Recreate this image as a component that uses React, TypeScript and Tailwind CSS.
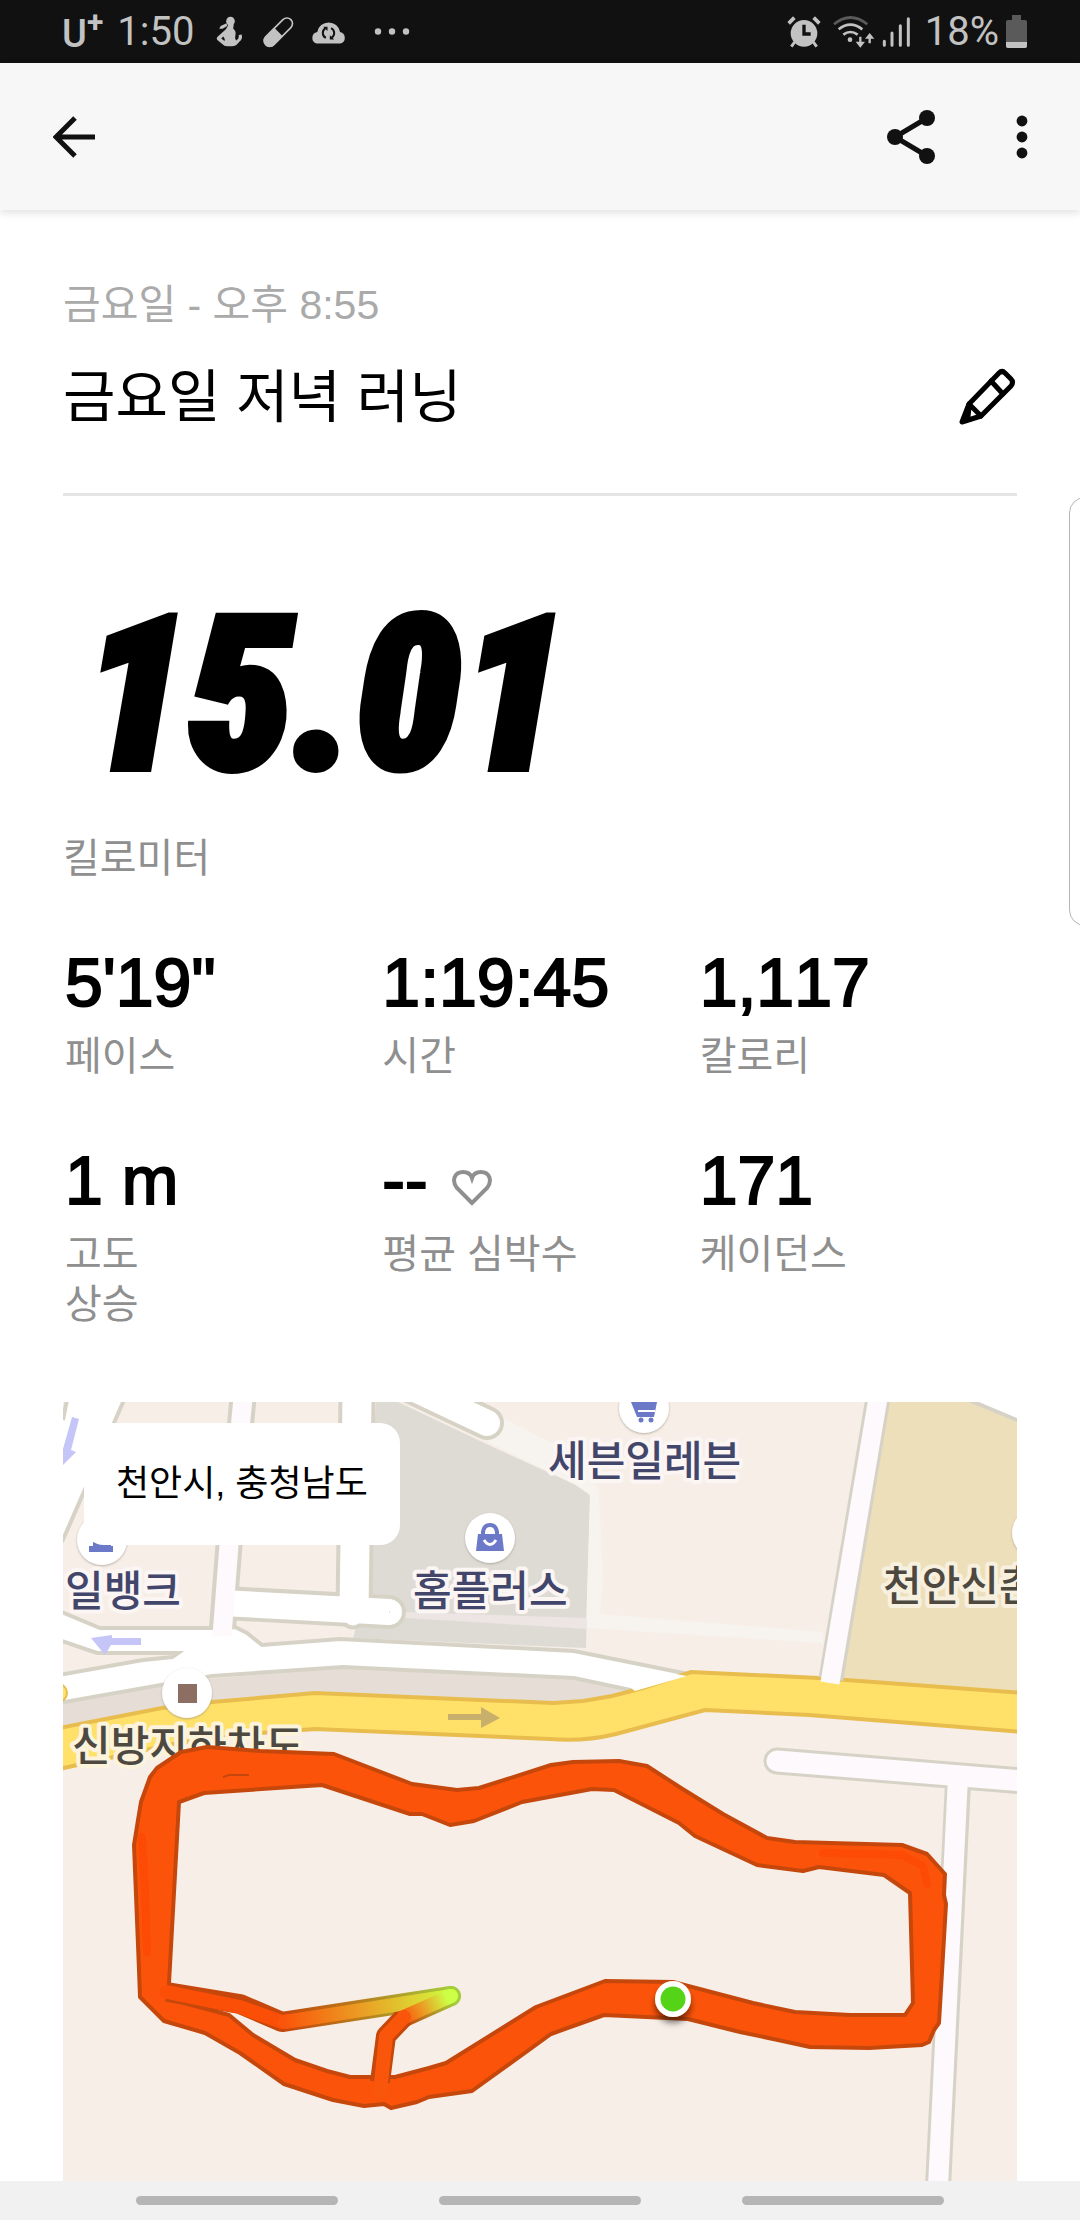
import React from 'react';

const stats = [
  { value: `5'19"`, label: '페이스' },
  { value: '1:19:45', label: '시간' },
  { value: '1,117', label: '칼로리' },
  { value: '1 m', label: '고도\n상승' },
  { value: '--', label: '평균 심박수', heart: true },
  { value: '171', label: '케이던스' },
];

const StatusBar: React.FC = () => (
  <div className="flex h-[63px] items-center justify-between bg-[#111111] pl-[62px] pr-[53px] font-[Roboto,sans-serif] text-[#c2c2c2]">
    <div className="flex items-center">
      <div className="flex items-start leading-none">
        <span className="pt-1 text-[38px] font-medium leading-9">U</span>
        <span className="text-[30px] font-bold leading-5">+</span>
      </div>
      <span className="ml-[14px] text-[40px] leading-none">1:50</span>
      <svg className="ml-[22px] h-[31px] w-[27px]" viewBox="32 30 82 94" fill="currentColor">
        <ellipse cx="76" cy="46" rx="13" ry="14" />
        <path d="M64 52 L46 60 L42 69 L52 69 L66 60 Z" />
        <path
          fillRule="evenodd"
          d="M70 56 H86 L84 68 Q94 76 91 88 Q88 98 93 104 Q103 100 101 88 L110 86 Q114 100 102 109 Q94 122 80 122 H66 Q56 122 52 116 L36 103 Q32 98 36 94 L62 70 Z M54 92 L48 98 L58 106 Q60 98 54 92 Z"
        />
      </svg>
      <svg className="ml-5 h-8 w-[31px]" viewBox="175 28 94 96">
        <g transform="rotate(45 222 76)">
          <rect x="205" y="23" width="34" height="107" rx="17" fill="none" stroke="currentColor" strokeWidth="5" />
          <path d="M203 76 H241 V114 A19 19 0 0 1 203 114 Z" fill="currentColor" />
        </g>
      </svg>
      <svg className="ml-4 h-[26px] w-[37px]" viewBox="316 38 112 78">
        <path d="M336 112 A18 18 0 0 1 338 77 A35 35 0 0 1 407 77 A18 18 0 0 1 408 112 Z" fill="currentColor" />
        <g fill="none" stroke="#111111" strokeWidth="6">
          <path d="M364 95 A17 17 0 0 1 362 66" />
          <path d="M380 65 A17 17 0 0 1 382 94" />
        </g>
        <path d="M356 61 H369 V74 Z M389 100 H376 V87 Z" fill="#111111" />
      </svg>
      <svg className="ml-[27px] h-[7px] w-9" viewBox="0 0 36 7" fill="currentColor">
        <circle cx="4" cy="3.5" r="3.2" />
        <circle cx="18" cy="3.5" r="3.2" />
        <circle cx="32" cy="3.5" r="3.2" />
      </svg>
    </div>
    <div className="flex items-center">
      <svg className="h-8 w-[34px]" viewBox="22 28 100 96">
        <circle cx="72" cy="80" r="40" fill="currentColor" />
        <g fill="none" stroke="currentColor" strokeWidth="11">
          <path d="M26 50 L43 33 M101 33 L118 50" />
          <path d="M44 106 L34 120 M100 106 L110 120" strokeWidth="9" />
        </g>
        <path d="M72 54 V82 H92" fill="none" stroke="#111111" strokeWidth="10" />
      </svg>
      <svg className="ml-3 h-8 w-[42px]" viewBox="162 26 126 96" fill="none" stroke="currentColor" strokeWidth="8">
        <path d="M165 51 Q214 10 265 51" stroke="#5a5a5a" />
        <path d="M179 66 Q214 38 250 66" />
        <path d="M193 82 Q214 66 236 82" />
        <circle cx="213" cy="97" r="7" fill="currentColor" stroke="none" />
        <path d="M244 88 V108 M272 108 V88" strokeWidth="7" />
        <path d="M230 103 H258 L244 121 Z M258 94 H286 L272 77 Z" fill="currentColor" stroke="none" />
      </svg>
      <svg className="ml-[7px] h-8 w-7" viewBox="310 28 84 96" stroke="currentColor" strokeWidth="9" strokeLinecap="round">
        <path d="M317 104 V116 M340 79 V116 M365 57 V116 M389 36 V116" />
      </svg>
      <span className="ml-[15px] text-[40px] leading-none">18%</span>
      <svg className="ml-[7px] h-[33px] w-[21px]" viewBox="0 0 21 33">
        <path d="M6 0 H15 V5 H19 Q21 5 21 7 V31 Q21 33 19 33 H2 Q0 33 0 31 V7 Q0 5 2 5 H6 Z" fill="#5a5a5a" />
        <path d="M0 27 H21 V31 Q21 33 19 33 H2 Q0 33 0 31 Z" fill="currentColor" />
      </svg>
    </div>
  </div>
);

const AppBar: React.FC = () => (
  <header className="flex h-[147px] items-center justify-between bg-[#f7f7f7] pl-[53px] pr-[50px] text-[#111111] shadow-[0_3px_8px_rgba(0,0,0,0.12)]">
    <button type="button" aria-label="뒤로">
      <svg className="h-[42px] w-[42px]" viewBox="0 0 42 42" fill="none" stroke="currentColor" strokeWidth="5">
        <path d="M22 2 L3 21 L22 40 M3 21 H42" />
      </svg>
    </button>
    <div className="flex items-center gap-[79px]">
      <button type="button" aria-label="공유">
        <svg className="h-[54px] w-12" viewBox="0 0 48 54" fill="currentColor">
          <path d="M40 8 L8 27 L40 46" fill="none" stroke="currentColor" strokeWidth="5" />
          <circle cx="40" cy="8" r="8" />
          <circle cx="8" cy="27" r="8" />
          <circle cx="40" cy="46" r="8" />
        </svg>
      </button>
      <button type="button" aria-label="더보기">
        <svg className="h-[44px] w-4" viewBox="0 0 16 44" fill="currentColor">
          <circle cx="8" cy="6" r="5.4" />
          <circle cx="8" cy="22" r="5.4" />
          <circle cx="8" cy="38" r="5.4" />
        </svg>
      </button>
    </div>
  </header>
);

const HeartIcon: React.FC = () => (
  <svg className="mt-4 h-9 w-10 text-[#8f8f8f]" viewBox="0 0 40 36" fill="none" stroke="currentColor" strokeWidth="4">
    <path d="M20 33 L5 18 C-1 10 3 2 11 2 C16 2 19 5 20 8 C21 5 24 2 29 2 C37 2 41 10 35 18 Z" />
  </svg>
);

const RouteMap: React.FC = () => (
  <svg
    className="block h-[779px] w-full"
    viewBox="0 0 954 779"
    preserveAspectRatio="xMidYMin slice"
    role="img"
    aria-label="러닝 경로"
  >
    <defs>
      <linearGradient id="paceFill" gradientUnits="userSpaceOnUse" x1="222" y1="621" x2="388" y2="594">
        <stop offset="0" stopColor="#fa560b" />
        <stop offset="0.5" stopColor="#e9a426" />
        <stop offset="0.85" stopColor="#dadf35" />
        <stop offset="1" stopColor="#ccff45" />
      </linearGradient>
      <linearGradient id="paceEdge" gradientUnits="userSpaceOnUse" x1="222" y1="621" x2="388" y2="594">
        <stop offset="0" stopColor="#c5470c" />
        <stop offset="0.5" stopColor="#b7831f" />
        <stop offset="1" stopColor="#a5cc3b" />
      </linearGradient>
      <linearGradient id="returnFill" gradientUnits="userSpaceOnUse" x1="340" y1="616" x2="384" y2="596">
        <stop offset="0" stopColor="#fa560b" />
        <stop offset="0.5" stopColor="#e9a426" />
        <stop offset="1" stopColor="#ccff45" />
      </linearGradient>
      <linearGradient id="returnEdge" gradientUnits="userSpaceOnUse" x1="340" y1="616" x2="388" y2="594">
        <stop offset="0" stopColor="#c5470c" />
        <stop offset="1" stopColor="#a5cc3b" />
      </linearGradient>
      <filter id="dotShadow" x="-50%" y="-50%" width="200%" height="200%">
        <feDropShadow dx="0" dy="6" stdDeviation="3" floodColor="#000000" floodOpacity="0.5" />
      </filter>
      <filter id="pinShadow" x="-50%" y="-50%" width="200%" height="200%">
        <feDropShadow dx="0" dy="1" stdDeviation="1" floodColor="#8a8578" floodOpacity="0.6" />
      </filter>
    </defs>

    <rect width="954" height="779" fill="#f7eee7" />

    {/* blocks */}
    <path d="M313 0 H335 L432 46 L511 82 Q527 88 527 96 L523 246 L290 236 L300 200 Z" fill="#dedbd5" />
    <path d="M436 14 L522 58 L536 90 L540 180 L537 212 L760 230 V241 L523 226 L527 93 L511 82 L425 40 Z" fill="#f7f3ee" />
    <path d="M342 210 L524 216 V227 L342 216 Z" fill="#ece5e4" />
    <path d="M815 0 H907 L954 20 V289 L770 276 Z" fill="#eedfbb" />
    <path d="M907 0 H954 V19 Z" fill="#ffffff" />
    <path d="M906 -2 L956 19" stroke="#d6d3c6" strokeWidth="4" />
    <path d="M0 300 L99 281 L280 265 L511 276 L590 291 L504 303 L252 293 L99 308 L0 327 Z" fill="#e6ded6" />

    {/* small roads */}
    <path d="M3 0 H61 L0 138 V14 Z" fill="#ffffff" />
    <path d="M61 -2 L-1 140 M4 -2 L0 18" stroke="#d6d3c6" strokeWidth="4" />
    <g fill="none" stroke="#d6d3c6">
      <path d="M350 -14 L424 21" strokeWidth="34" strokeLinecap="round" />
      <path d="M180 -4 L166 143 L159 232" strokeWidth="27" />
      <path d="M294 -4 L291 205" strokeWidth="37" />
      <path d="M162 201 L326 210" strokeWidth="34" />
      <circle cx="326" cy="210" r="8" strokeWidth="18" />
      <circle cx="290" cy="214" r="12" strokeWidth="3" />
    </g>

    {/* main white road */}
    <g stroke="#d6d3c6" strokeWidth="4" fill="#ffffff">
      <path d="M-4 209 L37 226 H149 L172 225 L184 231 L199 243 L277 237 L511 249 L640 275 L572 289 L511 276 L280 265 L149 274 L-4 301 V273 L80 258 L149 251 H34 L-4 238 Z" />
    </g>
    <path d="M130 243 L190 248 L160 266 L90 271 Z" fill="#ffffff" />
    <g fill="none" stroke="#ffffff">
      <path d="M350 -14 L424 21" strokeWidth="26" strokeLinecap="round" />
      <path d="M294 -4 L291 210" strokeWidth="29" />
      <path d="M160 201 L326 210" strokeWidth="26" />
      <circle cx="326" cy="210" r="6" strokeWidth="14" />
      <circle cx="290" cy="214" r="9" fill="#ffffff" />
      <path d="M180 -4 L166 143 L159 234" strokeWidth="19" stroke="#fdf9fd" />
    </g>

    {/* yellow road */}
    <path
      d="M-4 326 L99 306 L149 300 L252 291 L490 301 L520 299 L549 294 L580 286 L628 270 L756 276 L960 291 V330 L746 313 L642 308 L553 332 Q520 340 487 337 L252 327 L197 331 L115 341 L-4 367 Z"
      fill="#ffe169"
      stroke="#e8bd4d"
      strokeWidth="4"
    />
    <path d="M572 289 L624 274 L600 270 L560 280 Z" fill="#ffffff" />
    <circle cx="-5" cy="291" r="9" fill="#ffe169" stroke="#e8bd4d" strokeWidth="2" />

    {/* right side roads */}
    <path d="M815 -4 L768 277" stroke="#d6d3c6" strokeWidth="25" />
    <path d="M815 -4 L767 281" stroke="#fdf9fd" strokeWidth="19" />
    <g fill="none" stroke="#d6d3c6">
      <path d="M714 359 L960 379" strokeWidth="27" strokeLinecap="round" />
      <path d="M895 381 L875 785" strokeWidth="26" />
    </g>
    <g fill="none" stroke="#fdf9fd">
      <path d="M714 359 L960 379" strokeWidth="21" strokeLinecap="round" />
      <path d="M895 375 L875 785" strokeWidth="20" />
    </g>

    {/* direction arrows */}
    <g fill="#c5c6f7">
      <path d="M9 15 L16 17 L8 48 L13 50 L0 63 V47 Z" />
      <path d="M28 236 L49 233 V236 H78 V243 H48 L42 253 Z" />
    </g>
    <path d="M385 312 H418 V305 L437 316 L418 326 V318 H385 Z" fill="#c8b06c" />

    {/* places */}
    <g fill="#ffffff" filter="url(#pinShadow)">
      <circle cx="39" cy="138" r="25" />
      <circle cx="427" cy="136" r="25" />
      <circle cx="581" cy="6" r="25" />
      <circle cx="124" cy="291" r="25" />
      <circle cx="974" cy="131" r="25" />
    </g>
    <path d="M30 138 H48 V144 H50 V150 H26 V144 H30 Z" fill="#6c79c8" />
    <path d="M415 132 H439 L441 149 H413 Z" fill="#6c79c8" />
    <path d="M420 133 V130 Q421 123 427 123 Q433 123 434 130 V133" fill="none" stroke="#6c79c8" strokeWidth="4" />
    <path d="M421 138 Q427 147 433 138" fill="none" stroke="#ffffff" strokeWidth="3" />
    <path d="M568 0 H594 L591 15 H574 Z" fill="#6c79c8" />
    <path d="M575 9 H592" stroke="#ffffff" strokeWidth="2" />
    <circle cx="578" cy="18" r="2.5" fill="#6c79c8" />
    <circle cx="588" cy="18" r="2.5" fill="#6c79c8" />
    <rect x="115" y="282" width="19" height="19" fill="#8d6e63" />
    <g
      className="font-['Noto_Sans_CJK_KR',sans-serif] text-[42px] font-medium"
      fill="#43466b"
      stroke="#fbf5f4"
      strokeWidth="8"
      strokeLinejoin="round"
      paintOrder="stroke"
    >
      <text x="485" y="74">세븐일레븐</text>
      <text x="350" y="204">홈플러스</text>
      <text x="2" y="204">일뱅크</text>
      <text x="820" y="199" fill="#4d4840" stroke="#f8f0df">천안신촌</text>
      <text x="9" y="359" fill="#4d4840" stroke="#fbf3dc">신방지하차도</text>
    </g>

    {/* run route */}
    <path
      fillRule="evenodd"
      fill="#fb540a"
      stroke="#c5470c"
      strokeWidth="4"
      strokeLinejoin="round"
      d="M144 345 L197 349 L271 352 L349 382 L394 388 L416 386 L488 363 L510 360 L556 359 L584 364 L618 386 L660 412 L704 436 L732 440 L839 443 L864 452 L882 472 L881 493 L883 502 L876 621 L871 628 L866 640 L859 643 L806 646 L747 645 L715 638 L677 630 L625 617 L541 613 L488 632 L409 689 L366 695 L354 700 L328 706 L321 702 L301 704 L270 698 L221 682 L177 651 L142 631 L101 619 L77 595 L76 568 L71 443 L75 418 L78 400 L87 375 L94 366 L118 350 Z
         M116 400 L141 391 L259 383 L347 412 L359 412 L387 423 L411 419 L459 400 L529 387 L551 388 L616 421 L632 434 L694 463 L740 469 L756 465 L821 473 L847 491 L850 601 L842 613 L787 613 L732 610 L690 601 L610 580 L542 579 L473 605 L383 661 L366 666 L332 675 L287 675 L264 669 L232 658 L190 633 L166 613 L106 597 L106 581 Z"
    />
    <path d="M160 375 L166 373 L186 373" fill="none" stroke="#c5470c" strokeWidth="2" />
    <path
      d="M79 435 L82 490 L84 550 M760 451 L839 453 L860 464 L864 482"
      fill="none"
      stroke="#ff4400"
      strokeWidth="8"
      strokeLinecap="round"
      strokeLinejoin="round"
      opacity="0.6"
    />
    <g fill="none" strokeLinejoin="round">
      <path d="M104 590 L177 602 L219 620" stroke="#c5470c" strokeWidth="20" />
      <path d="M219 620 L388 594" stroke="url(#paceEdge)" strokeWidth="20" strokeLinecap="round" />
      <path d="M388 594 L341 615" stroke="url(#returnEdge)" strokeWidth="20" strokeLinecap="round" />
      <path d="M341 615 L323 634 L317 680" stroke="#c5470c" strokeWidth="20" />
      <path d="M104 590 L177 605 L219 620 L224 619" stroke="#fb4f08" strokeWidth="14" strokeLinecap="round" />
      <path d="M222 620 L388 594" stroke="url(#paceFill)" strokeWidth="14" strokeLinecap="round" />
      <path d="M388 594 L341 615" stroke="url(#returnFill)" strokeWidth="14" strokeLinecap="round" />
      <path d="M341 615 L323 634 L317 690" stroke="#fa560b" strokeWidth="14" strokeLinecap="round" />
    </g>
    <g filter="url(#dotShadow)">
      <circle cx="610" cy="597" r="18" fill="#ffffff" />
    </g>
    <circle cx="610" cy="597" r="12.5" fill="#54d317" />
  </svg>
);

const App: React.FC = () => {
  return (
    <div className="relative flex min-h-screen flex-col overflow-hidden bg-white font-['Liberation_Sans','Noto_Sans_CJK_KR',sans-serif] text-black">
      <StatusBar />
      <AppBar />

      <main className="flex-1 px-[63px] pt-[70px]">
        <section className="border-b-[3px] border-[#e5e5e5] pb-[61px]">
          <p className="text-[41px] leading-[50px] text-[#aaaaaa]">금요일 - 오후 8:55</p>
          <div className="mt-8 flex items-center justify-between">
            <h1 className="text-[57px] leading-[70px]">금요일 저녁 러닝</h1>
            <button type="button" aria-label="제목 수정">
              <svg
                className="h-[60px] w-[60px]"
                viewBox="0 0 60 60"
                fill="none"
                stroke="currentColor"
                strokeWidth="5"
                strokeLinejoin="round"
                strokeLinecap="round"
              >
                <path d="M5 55 L12 37 L42 6 Q45 3 48 6 L54 12 Q57 15 54 19 L24 49 Z" />
                <path d="M34 14 L46 27 M12 37 L24 49 M12 40 L11 50" />
              </svg>
            </button>
          </div>
        </section>

        <section className="mt-[120px]">
          <p className="pl-5 font-['Roboto_Condensed',Roboto,sans-serif] text-[212px] font-black italic leading-[160px] [-webkit-text-stroke:8px_black]">
            15.01
          </p>
          <p className="mt-[57px] text-[40px] leading-[50px] text-[#8f8f8f]">킬로미터</p>
        </section>

        <dl className="mt-16 grid grid-cols-3 gap-y-16 pl-0.5">
          {stats.map(({ value, label, heart }) => (
            <div key={label} className="flex flex-col-reverse justify-end gap-[14px]">
              <dt className="whitespace-pre-line text-[40px] leading-[50px] text-[#8f8f8f]">{label}</dt>
              <dd className="flex items-center gap-6 text-[68px] leading-[70px] [-webkit-text-stroke:2px_black] [font-kerning:none]">
                {value}
                {heart && <HeartIcon />}
              </dd>
            </div>
          ))}
        </dl>

        <section className="relative mt-[73px]">
          <RouteMap />
          <div className="absolute left-[21px] top-[21px] rounded-[20px] bg-white px-8 py-9 text-[36px] leading-[50px]">
            천안시, 충청남도
          </div>
        </section>
      </main>

      <nav className="flex h-[39px] items-center justify-center gap-[101px] bg-[#f1f1f1]">
        <button type="button" aria-label="최근 앱" className="h-[9px] w-[202px] rounded-full bg-[#b5b5b5]" />
        <button type="button" aria-label="홈" className="h-[9px] w-[202px] rounded-full bg-[#b5b5b5]" />
        <button type="button" aria-label="뒤로 가기" className="h-[9px] w-[202px] rounded-full bg-[#b5b5b5]" />
      </nav>

      {/* edge panel handle */}
      <div className="absolute right-0 top-[497px] h-[429px] w-[11px] overflow-hidden">
        <div className="h-full w-8 rounded-[16px] border border-[#b5b5b5] bg-white" />
      </div>
    </div>
  );
};

export default App;
